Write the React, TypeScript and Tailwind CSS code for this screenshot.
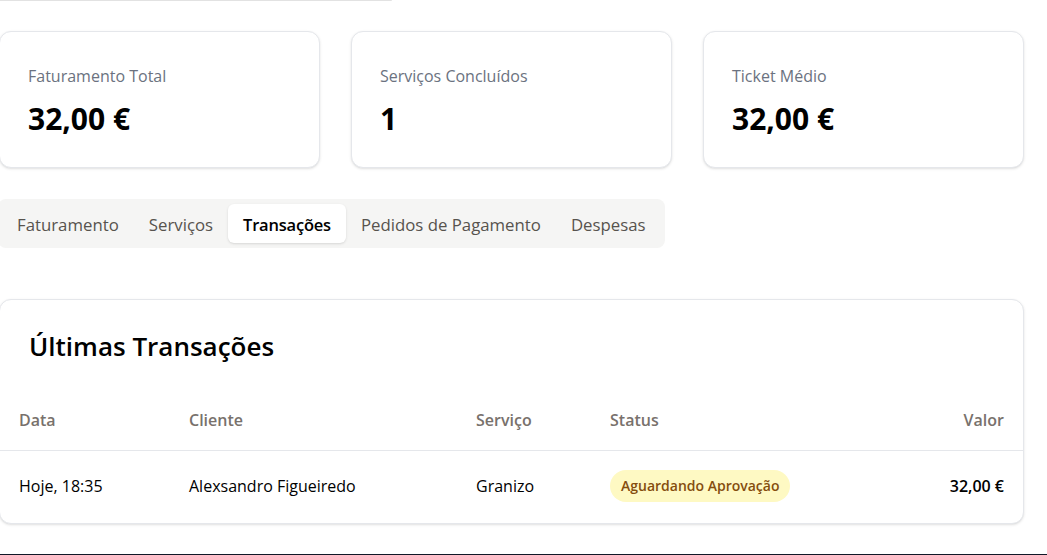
import type { FC } from 'react';

const stats = [
  { label: 'Faturamento Total', value: '32,00 €' },
  { label: 'Serviços Concluídos', value: '1' },
  { label: 'Ticket Médio', value: '32,00 €' },
];

const tabs = ['Faturamento', 'Serviços', 'Transações', 'Pedidos de Pagamento', 'Despesas'];

const StatCard: FC<{ label: string; value: string }> = ({ label, value }) => (
  <div className="h-[137px] rounded-xl border border-[#e5e7eb] bg-white px-[28px] pt-[32px] shadow-sm">
    <p className="text-base leading-6 text-[#6b7280]">{label}</p>
    <p className="mt-[13px] text-[30px] font-bold leading-9 text-black">{value}</p>
  </div>
);

const App: FC = () => {
  const active = 'Transações';

  return (
    <div
      className="flex h-[555px] w-full flex-col overflow-hidden bg-white"
      style={{ fontFamily: '"Open Sans", "Noto Sans", sans-serif' }}
    >
      <div className="h-px w-[392px] shrink-0 rounded-br bg-[#e2e2e2]" />

      <div className="ml-[-1px] w-[1025px] shrink-0">
        <div className="mt-[30px] grid grid-cols-3 gap-[31px]">
          {stats.map(s => (
            <StatCard key={s.label} label={s.label} value={s.value} />
          ))}
        </div>

        <div className="ml-[-1px] mt-[31px] inline-flex rounded-lg bg-[#f5f5f4] px-1 py-[5px]">
          {tabs.map(tab => (
            <button
              key={tab}
              className={
                tab === active
                  ? 'h-[39px] rounded-md bg-white px-[15px] pt-[3px] text-[16.5px] font-semibold tracking-[-0.2px] text-black shadow-sm'
                  : 'h-[39px] rounded-md px-[15px] pt-[3px] text-[16.8px] font-medium text-[#57534e]'
              }
            >
              {tab}
            </button>
          ))}
        </div>

        <div className="mt-[51px] h-[225px] overflow-hidden rounded-xl border border-[#e5e7eb] bg-white shadow-sm">
          <h2 className="px-[29px] pb-[28px] pt-[30px] text-[26px] font-semibold leading-8 text-black">
            Últimas Transações
          </h2>
          <table className="w-full table-fixed text-left text-base">
            <colgroup>
              <col className="w-[170px]" />
              <col className="w-[287px]" />
              <col className="w-[134px]" />
              <col />
              <col className="w-[200px]" />
            </colgroup>
            <thead>
              <tr className="h-[60px] border-b border-[#e5e7eb]">
                <th className="px-[19px] font-semibold text-[#78716c]">Data</th>
                <th className="px-[19px] font-semibold text-[#78716c]">Cliente</th>
                <th className="px-[19px] font-semibold text-[#78716c]">Serviço</th>
                <th className="px-[19px] font-semibold text-[#78716c]">Status</th>
                <th className="px-[19px] text-right font-semibold text-[#78716c]">Valor</th>
              </tr>
            </thead>
            <tbody>
              <tr className="h-[72px]">
                <td className="px-[19px] text-black">Hoje, 18:35</td>
                <td className="px-[19px] text-black">Alexsandro Figueiredo</td>
                <td className="px-[19px] text-black">Granizo</td>
                <td className="px-[19px]">
                  <span className="inline-flex h-8 items-center rounded-full bg-[#fef9c3] px-[11px] text-sm font-semibold text-[#854d0e]">
                    Aguardando Aprovação
                  </span>
                </td>
                <td className="px-[19px] text-right font-semibold text-black">32,00 €</td>
              </tr>
            </tbody>
          </table>
        </div>
      </div>

      <div className="mt-[30px] h-[3px] w-full shrink-0 bg-[#111827]" />
    </div>
  );
};

export default App;
